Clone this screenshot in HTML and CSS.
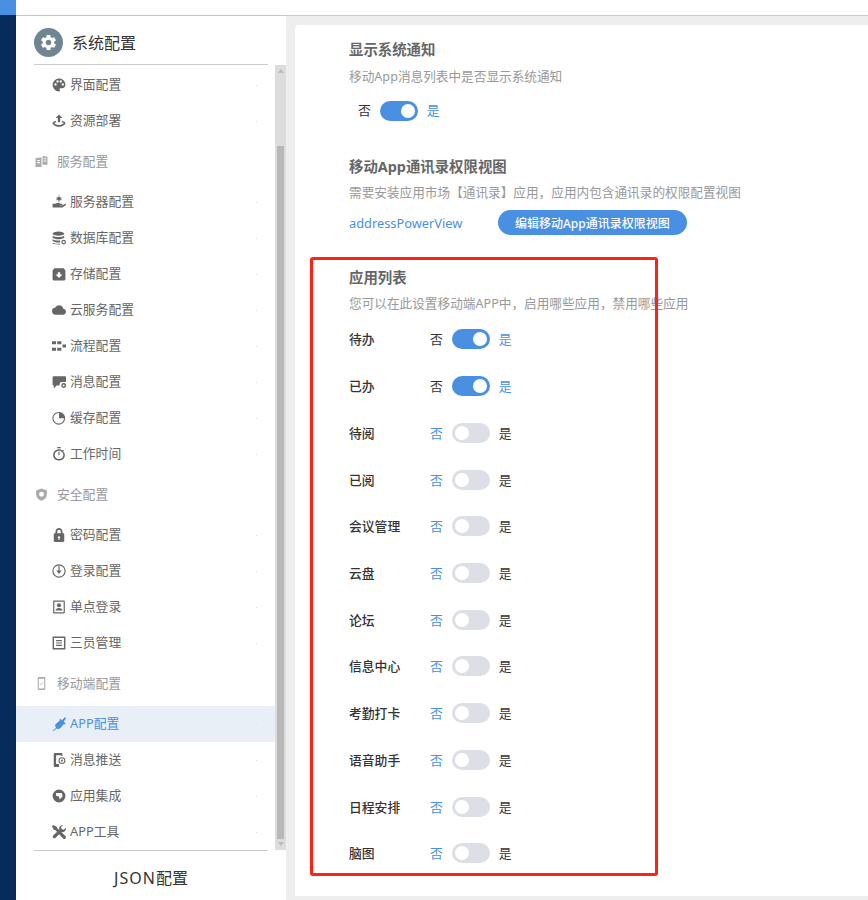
FILE: index.html
```html
<!DOCTYPE html>
<html lang="zh-CN">
<head>
    <meta charset="UTF-8">
    <meta name="viewport" content="width=device-width, initial-scale=1.0">
    <title>系统配置</title>
    <link rel="stylesheet" href="styles.css">
</head>
<body>
<div class="app">
    <div class="rail"><div class="rail-logo"></div></div>

    <div class="page">
        <div class="topbar"></div>

        <div class="workspace">
            <aside class="sidebar">
                <div class="side-head">
                    <span class="head-badge">
                        <svg viewBox="0 0 24 24"><path d="M19.14 12.94c.04-.3.06-.61.06-.94 0-.32-.02-.64-.07-.94l2.03-1.58a.49.49 0 0 0 .12-.61l-1.92-3.32a.488.488 0 0 0-.59-.22l-2.39.96c-.5-.38-1.03-.7-1.62-.94l-.36-2.54a.484.484 0 0 0-.48-.41h-3.84c-.24 0-.43.17-.47.41l-.36 2.54c-.59.24-1.13.57-1.62.94l-2.39-.96c-.22-.08-.47 0-.59.22L2.74 8.87c-.12.21-.08.47.12.61l2.03 1.58c-.05.3-.09.63-.09.94s.02.64.07.94l-2.03 1.58a.49.49 0 0 0-.12.61l1.92 3.32c.12.22.37.29.59.22l2.39-.96c.5.38 1.03.7 1.62.94l.36 2.54c.05.24.24.41.48.41h3.84c.24 0 .44-.17.47-.41l.36-2.54c.59-.24 1.13-.56 1.62-.94l2.39.96c.22.08.47 0 .59-.22l1.92-3.32c.12-.22.07-.47-.12-.61l-2.01-1.58zM12 15.6c-1.98 0-3.6-1.62-3.6-3.6s1.62-3.6 3.6-3.6 3.6 1.62 3.6 3.6-1.62 3.6-3.6 3.6z"/></svg>
                    </span>
                    <span>系统配置</span>
                </div>

                <div class="side-scroll">
                    <nav class="menu">
                        <div class="menu-item">
                            <svg class="icon" viewBox="0 0 24 24"><path d="M12 1a11 11 0 0 0 0 22c1 0 1.700-.7 1.700-1.600 0-.5-.2-.8-.4-1.100-.3-.3-.4-.7-.4-1.100 0-.9.7-1.700 1.700-1.700H17c3.500 0 6-2.700 6-6C23 5.500 18 1 12 1zM6 13a2 2 0 1 1 0-4 2 2 0 0 1 0 4zm3.500-5a2 2 0 1 1 0-4 2 2 0 0 1 0 4zm5.500 0a2 2 0 1 1 0-4 2 2 0 0 1 0 4zm3.500 5a2 2 0 1 1 0-4 2 2 0 0 1 0 4z" fill-rule="evenodd"/></svg>
                            <span>界面配置</span>
                        </div>
                        <div class="menu-item">
                            <svg class="icon" viewBox="0 0 24 24"><path d="M12 1l6 6h-4v7h-4V7H6z"/><path d="M7 11.500C3.500 12.300 1 13.700 1 15.500 1 18.500 6 22 12 22s11-3.500 11-6.500c0-1.800-2.500-3.200-6-4v2.600c1.700.4 3 1 3 1.400 0 1-3.500 3.500-8 3.500s-8-2.500-8-3.500c0-.4 1.300-1 3-1.400z"/></svg>
                            <span>资源部署</span>
                        </div>

                        <div class="menu-group">
                            <svg class="icon" viewBox="0 0 24 24"><path d="M1 6l11-2v18H1zm3 3v2h5V9zm0 4v2h5v-2zM14 2l9 1v15h-9zm2 4v2h5V6zm0 4v2h5v-2z" fill-rule="evenodd"/></svg>
                            <span>服务配置</span>
                        </div>
                        <div class="menu-item">
                            <svg class="icon" viewBox="0 0 24 24"><circle cx="12" cy="6.500" r="3.500"/><path d="M12 0l1.500 2h-3zM12 13l-1.500-2h3zM6.500 4l2 .5-1 1.500zM17.500 4l-2 .5 1 1.500zM6.500 9l2-.5-1-1.500zM17.500 9l-2-.5 1-1.500z"/><path d="M1 15h4l4-1.500c2-.6 3.500 0 5 1.500h3c1.500 0 1.500 2 0 2h-4v.7h5l5-2.500c1-.4 2 1 1 1.800l-6 4.500H1z"/></svg>
                            <span>服务器配置</span>
                        </div>
                        <div class="menu-item">
                            <svg class="icon" viewBox="0 0 24 24"><ellipse cx="11" cy="4.500" rx="10" ry="3.500"/><path d="M1 7.500c2 2 5.500 2.800 10 2.800s8-.8 10-2.800V11c-2 2-5.500 3-10 3S3 13 1 11zM1 13.500c2 2 5.500 2.800 10 2.800 1 0 2-.1 3-.2v3.500c-1 .2-2 .2-3 .2-4.500 0-8-1-10-3zM1 19.500c2 1.500 5.500 2.300 10 2.300h3V23h-3c-5.500 0-10-1-10-2z"/><circle cx="20" cy="19" r="3" fill="none" stroke="#666" stroke-width="2"/></svg>
                            <span>数据库配置</span>
                        </div>
                        <div class="menu-item">
                            <svg class="icon" viewBox="0 0 24 24"><path d="M4 2h16l3 4v15a2 2 0 0 1-2 2H3a2 2 0 0 1-2-2V6zm8 17l6-6h-4V9h-4v4H6z" fill-rule="evenodd"/></svg>
                            <span>存储配置</span>
                        </div>
                        <div class="menu-item">
                            <svg class="icon" viewBox="0 0 24 24"><path d="M19.350 10.040A7.490 7.490 0 0 0 12 4C9.110 4 6.600 5.640 5.350 8.040A5.994 5.994 0 0 0 0 14c0 3.310 2.690 6 6 6h13c2.760 0 5-2.240 5-5 0-2.640-2.050-4.780-4.650-4.960z"/></svg>
                            <span>云服务配置</span>
                        </div>
                        <div class="menu-item">
                            <svg class="icon" viewBox="0 0 24 24"><path d="M0 4h7v5H0zM9 4h7v5H9zM0 15h7v5H0zM9 15h7v5H9zM18 9.500h6v5h-6z"/></svg>
                            <span>流程配置</span>
                        </div>
                        <div class="menu-item">
                            <svg class="icon" viewBox="0 0 24 24"><path d="M3 2h19a2 2 0 0 1 2 2v8h-7a4 4 0 0 0-4 4v2H8l-5 5v-5a2 2 0 0 1-2-2V4a2 2 0 0 1 2-2z"/><circle cx="20" cy="18" r="3" fill="none" stroke="#666" stroke-width="2.500"/></svg>
                            <span>消息配置</span>
                        </div>
                        <div class="menu-item">
                            <svg class="icon" viewBox="0 0 24 24"><circle cx="11.500" cy="12.500" r="10" fill="none" stroke="#666" stroke-width="1.800"/><path d="M12 2a10.500 10.500 0 0 1 10 10.500H12z"/></svg>
                            <span>缓存配置</span>
                        </div>
                        <div class="menu-item">
                            <svg class="icon" viewBox="0 0 24 24"><path d="M15 0H9v2h6zM11 14h2V8h-2zm8.030-6.610l1.420-1.420c-.43-.51-.9-.99-1.410-1.410l-1.420 1.420A8.962 8.962 0 0 0 12 4c-4.970 0-10 4.030-10 9.500S6.020 23 12 23s10-4.030 10-9.500c0-2.120-1.740-4.570-2.970-6.110zM12 20.500c-3.870 0-7.500-3.130-7.500-7s3.630-7 7.500-7 7.500 3.130 7.500 7-3.630 7-7.500 7z"/></svg>
                            <span>工作时间</span>
                        </div>

                        <div class="menu-group">
                            <svg class="icon" viewBox="0 0 24 24"><path d="M12 1L2 4.500V11c0 5.800 4 10.500 10 12.500C18 21.500 22 16.800 22 11V4.500zm0 15a4.500 4.500 0 1 1 0-9 4.500 4.500 0 0 1 0 9z" fill-rule="evenodd"/></svg>
                            <span>安全配置</span>
                        </div>
                        <div class="menu-item">
                            <svg class="icon" viewBox="0 0 24 24"><path d="M19 9h-1V6c0-3.200-2.800-6-6-6S6 2.800 6 6v3H5c-1.100 0-2 .9-2 2v11c0 1.100.9 2 2 2h14c1.100 0 2-.9 2-2V11c0-1.100-.9-2-2-2zm-7 5a2 2 0 0 1 1 3.700V20h-2v-2.300A2 2 0 0 1 12 14zM9 9V6a3 3 0 0 1 6 0v3z" fill-rule="evenodd"/></svg>
                            <span>密码配置</span>
                        </div>
                        <div class="menu-item">
                            <svg class="icon" viewBox="0 0 24 24"><circle cx="12" cy="12" r="10.500" fill="none" stroke="#666" stroke-width="2"/><path d="M11 3h2v8h3.500L12 17l-4.500-6H11z"/></svg>
                            <span>登录配置</span>
                        </div>
                        <div class="menu-item">
                            <svg class="icon" viewBox="0 0 24 24"><path d="M2 1h18a2 2 0 0 1 2 2v18a2 2 0 0 1-2 2H2zm2 2v18h16V3z" fill-rule="evenodd"/><circle cx="12" cy="9" r="3.500"/><path d="M6 18c0-3 3-4.500 6-4.500s6 1.500 6 4.500z"/></svg>
                            <span>单点登录</span>
                        </div>
                        <div class="menu-item">
                            <svg class="icon" viewBox="0 0 24 24"><path d="M1 1h22v22H1zm2.500 2.500v17h17v-17z" fill-rule="evenodd"/><path d="M7 7h10v2H7zM7 11h10v2H7zM7 15h10v2H7z"/></svg>
                            <span>三员管理</span>
                        </div>

                        <div class="menu-group">
                            <svg class="icon" viewBox="0 0 24 24"><path d="M7 0h10a2 2 0 0 1 2 2v20a2 2 0 0 1-2 2H7a2 2 0 0 1-2-2V2a2 2 0 0 1 2-2zm0 3v18h10V3z" fill-rule="evenodd"/><path d="M9 12l2 2 4-4" fill="none" stroke="#aaa" stroke-width="1.500"/></svg>
                            <span>移动端配置</span>
                        </div>
                        <div class="menu-item is-active">
                            <svg class="icon" viewBox="0 0 24 24"><path d="M23 1l-1-.5-5 5-2.500-2.500-2 2 1 1-7 6a5 5 0 0 0 .5 6.500l-6 5 1 1 6-5a5 5 0 0 0 6.500-.5l6-7 1 1 2-2L20 7.500l4-5z"/></svg>
                            <span>APP配置</span>
                        </div>
                        <div class="menu-item">
                            <svg class="icon" viewBox="0 0 24 24"><path d="M5 0h11a2 2 0 0 1 2 2v3h-2V4H7v15h5v5H5a2 2 0 0 1-2-2V2a2 2 0 0 1 2-2z"/><circle cx="17" cy="13" r="5" fill="none" stroke="#666" stroke-width="1.800"/><circle cx="17" cy="13" r="1.800"/></svg>
                            <span>消息推送</span>
                        </div>
                        <div class="menu-item">
                            <svg class="icon" viewBox="0 0 24 24"><path d="M12 1a11 11 0 1 0 0 22 11 11 0 0 0 0-22zM7 7h10l1 6-5 5-1-5-5-1z" fill-rule="evenodd"/></svg>
                            <span>应用集成</span>
                        </div>
                        <div class="menu-item">
                            <svg class="icon" viewBox="0 0 24 24"><path d="M2 0L0 2l3 6 3 1 13 14a2.800 2.800 0 0 0 4-4L9.500 6 8 3z"/><path d="M18 0a6 6 0 0 0-5.500 8L1.500 18.500a3 3 0 0 0 4 4L16 12a6 6 0 0 0 7.500-7.500L20 8l-3.500-1-1-3.500L19 0z"/></svg>
                            <span>APP工具</span>
                        </div>
                    </nav>

                    <div class="scrollbar">
                        <span class="arrow-up"></span>
                        <span class="thumb"></span>
                        <span class="arrow-down"></span>
                    </div>
                </div>

                <div class="side-foot"><span class="foot-latin">JSON</span>配置</div>
            </aside>

            <main class="content">
                <div class="panel">
                    <section class="setting">
                        <h3>显示系统通知</h3>
                        <p>移动App消息列表中是否显示系统通知</p>
                        <div class="switch-row">
                            <span>否</span>
                            <span class="switch is-on"></span>
                            <span class="on-text">是</span>
                        </div>
                    </section>

                    <section class="setting setting-view">
                        <h3>移动App通讯录权限视图</h3>
                        <p>需要安装应用市场【通讯录】应用，应用内包含通讯录的权限配置视图</p>
                        <div class="view-row">
                            <span class="view-name">addressPowerView</span>
                            <button class="view-btn">编辑移动App通讯录权限视图</button>
                        </div>
                    </section>

                    <section class="setting setting-apps">
                        <h3>应用列表</h3>
                        <p>您可以在此设置移动端APP中，启用哪些应用，禁用哪些应用</p>
                        <div class="app-list">
                            <div class="app-row"><b>待办</b><span>否</span><span class="switch is-on"></span><span class="on-text">是</span></div>
                            <div class="app-row"><b>已办</b><span>否</span><span class="switch is-on"></span><span class="on-text">是</span></div>
                            <div class="app-row"><b>待阅</b><span class="on-text">否</span><span class="switch"></span><span>是</span></div>
                            <div class="app-row"><b>已阅</b><span class="on-text">否</span><span class="switch"></span><span>是</span></div>
                            <div class="app-row"><b>会议管理</b><span class="on-text">否</span><span class="switch"></span><span>是</span></div>
                            <div class="app-row"><b>云盘</b><span class="on-text">否</span><span class="switch"></span><span>是</span></div>
                            <div class="app-row"><b>论坛</b><span class="on-text">否</span><span class="switch"></span><span>是</span></div>
                            <div class="app-row"><b>信息中心</b><span class="on-text">否</span><span class="switch"></span><span>是</span></div>
                            <div class="app-row"><b>考勤打卡</b><span class="on-text">否</span><span class="switch"></span><span>是</span></div>
                            <div class="app-row"><b>语音助手</b><span class="on-text">否</span><span class="switch"></span><span>是</span></div>
                            <div class="app-row"><b>日程安排</b><span class="on-text">否</span><span class="switch"></span><span>是</span></div>
                            <div class="app-row"><b>脑图</b><span class="on-text">否</span><span class="switch"></span><span>是</span></div>
                        </div>
                    </section>

                    <div class="annotation"></div>
                </div>
            </main>
        </div>
    </div>
</div>
</body>
</html>
```

FILE: styles.css
```css
body {
    margin: 0;
    font-family: "Noto Sans", "Noto Sans CJK SC", sans-serif;
    font-size: 12.8px;
    line-height: 20px;
    color: #333;
}

.app {
    display: flex;
    height: 900px;
    overflow: hidden;
}

.rail {
    width: 16px;
    flex: none;
    background-color: #052c5a;
}

.rail-logo {
    height: 15px;
    background-color: #4a90e2;
}

.page {
    flex: 1;
    min-width: 0;
    display: flex;
    flex-direction: column;
}

.topbar {
    height: 15px;
    flex: none;
    background-color: #fff;
    border-bottom: 1px solid #ccc;
}

.workspace {
    flex: 1;
    min-height: 0;
    display: flex;
}

/* 左侧菜单 */
.sidebar {
    width: 270px;
    flex: none;
    display: flex;
    flex-direction: column;
    background-color: #fff;
    box-shadow: 1px 0 3px rgba(0, 0, 0, 0.08);
}

.side-head {
    height: 49px;
    flex: none;
    box-sizing: border-box;
    margin: 0 18px;
    padding-top: 12px;
    display: flex;
    align-items: flex-start;
    gap: 9px;
    font-size: 16px;
    line-height: 30px;
    border-bottom: 1px solid #ccc;
}

.head-badge {
    width: 29px;
    height: 29px;
    flex: none;
    border-radius: 50%;
    background-color: #6f8592;
    display: flex;
    align-items: center;
    justify-content: center;
}

.head-badge svg {
    width: 19px;
    height: 19px;
    fill: #fff;
}

.side-scroll {
    flex: 1;
    min-height: 0;
    display: flex;
}

.menu {
    flex: 1;
    min-width: 0;
    padding-top: 2px;
}

.menu-item {
    height: 36px;
    padding-left: 36px;
    display: flex;
    align-items: center;
    gap: 4px;
    color: #666;
}

.menu-item span,
.menu-group span {
    margin-bottom: 2px;
}

.menu-item::after {
    content: "";
    width: 1px;
    height: 1px;
    margin-left: auto;
    margin-right: 18px;
    background-color: #ddd;
}

.menu-item .icon {
    width: 14px;
    height: 14px;
    flex: none;
    fill: #666;
}

.menu-item.is-active {
    background-color: #e9eff7;
    color: #4a90e2;
}

.menu-item.is-active .icon {
    fill: #4a90e2;
}

.menu-group {
    height: 45px;
    padding-left: 19px;
    display: flex;
    align-items: center;
    gap: 9px;
    color: #999;
}

.menu-group .icon {
    width: 13px;
    height: 13px;
    flex: none;
    fill: #aaa;
}

.scrollbar {
    width: 11px;
    flex: none;
    display: flex;
    flex-direction: column;
    align-items: center;
    background-color: #dcdcdc;
}

.thumb {
    width: 7px;
    height: 693px;
    margin-top: auto;
    background-color: #b8b8b8;
}

.arrow-up,
.arrow-down {
    width: 0;
    height: 0;
    border-left: 3px solid transparent;
    border-right: 3px solid transparent;
}

.arrow-up {
    margin-top: 4px;
    border-bottom: 4px solid #bbb;
}

.arrow-down {
    margin: 3px 0 4px;
    border-top: 4px solid #bbb;
}

.side-foot {
    height: 50px;
    flex: none;
    box-sizing: border-box;
    margin: 0 18px;
    padding-top: 16px;
    border-top: 1px solid #ccc;
    text-align: center;
    font-size: 16px;
    line-height: 22px;
}

.foot-latin {
    letter-spacing: 1px;
}

/* 右侧内容 */
.content {
    flex: 1;
    min-width: 0;
    padding: 9px 0 4px 9px;
    background-color: #eee;
}

.panel {
    position: relative;
    height: 100%;
    box-sizing: border-box;
    padding: 15px 0 0 54px;
    background-color: #fff;
    border-radius: 4px 0 0 0;
}

.setting h3 {
    margin: 0;
    font-size: 14.4px;
    line-height: 20px;
    font-weight: bold;
    color: #666;
}

.setting p {
    margin: 6px 0 0;
    font-size: 12.65px;
    line-height: 20px;
    color: #999;
}

.setting-view {
    margin-top: 36px;
}

.setting-view p,
.setting-apps p {
    margin-top: 5px;
}

.setting-apps {
    margin-top: 33px;
}

.switch-row {
    height: 20px;
    margin-top: 15px;
    padding-left: 9px;
    display: flex;
    align-items: center;
    gap: 9px;
}

.switch-row span:not(.switch) {
    margin-bottom: 2px;
}

.on-text {
    color: #4a90e2;
}

.switch {
    width: 38px;
    height: 20px;
    flex: none;
    box-sizing: border-box;
    padding: 3px;
    border-radius: 10px;
    background-color: #dcdfe6;
    display: flex;
}

.switch::after {
    content: "";
    width: 14px;
    height: 14px;
    border-radius: 50%;
    background-color: #fff;
}

.switch.is-on {
    background-color: #4a90e2;
    justify-content: flex-end;
}

.view-row {
    margin-top: 8px;
    display: flex;
    align-items: center;
}

.view-name {
    width: 149px;
    color: #4a90e2;
}

.view-btn {
    height: 25px;
    padding: 0 17px;
    border: none;
    border-radius: 13px;
    background-color: #4a90e2;
    color: #fff;
    font-family: inherit;
    font-size: 12px;
    font-weight: 500;
}

.app-list {
    margin-top: 3px;
}

.app-row {
    height: 46.73px;
    display: flex;
    align-items: center;
    gap: 9px;
}

.app-row b {
    width: 72px;
    flex: none;
    color: #333;
    font-weight: 500;
}

/* 截图上的红色标注框 */
.annotation {
    position: absolute;
    left: 15px;
    top: 232px;
    width: 342px;
    height: 613px;
    border: 3px solid #ff2016;
    border-radius: 3px;
}
```
